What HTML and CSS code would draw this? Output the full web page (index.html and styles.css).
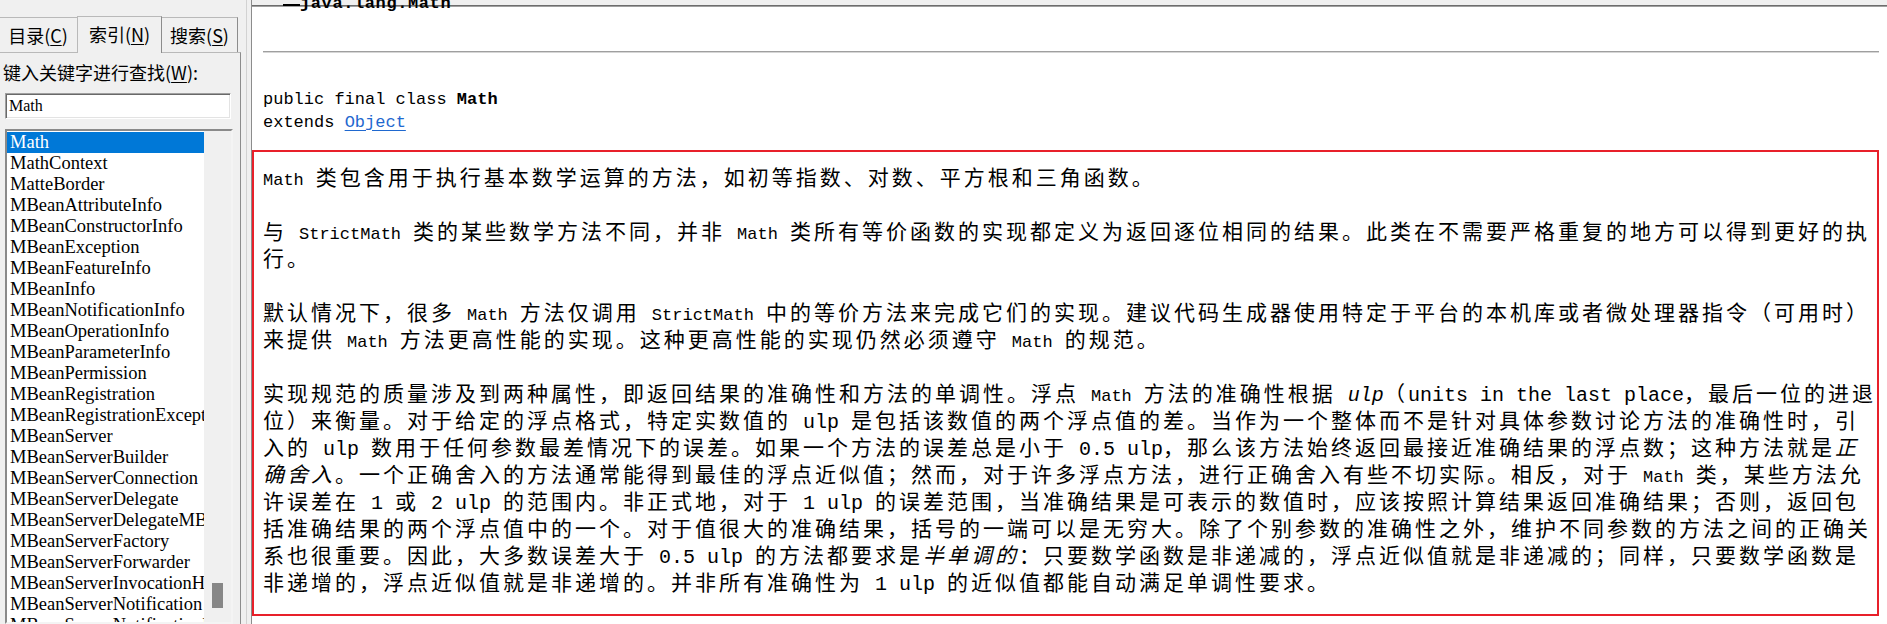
FILE: index.html
```html
<!DOCTYPE html>
<html lang="zh-CN">
<head>
<meta charset="utf-8">
<title>Math</title>
<link rel="stylesheet" href="styles.css">
</head>
<body>
<div class="app">
  <aside class="side">
    <div class="tabs">
      <div class="tab first">目录(<u>C</u>)</div>
      <div class="tab sel">索引(<u>N</u>)</div>
      <div class="tab third">搜索(<u>S</u>)</div>
    </div>
    <div class="pane">
      <div class="lbl">键入关键字进行查找(<u>W</u>):</div>
      <div class="field">Math</div>
      <div class="list">
        <div class="items">
          <div class="item sel">Math</div>
          <div class="item">MathContext</div>
          <div class="item">MatteBorder</div>
          <div class="item">MBeanAttributeInfo</div>
          <div class="item">MBeanConstructorInfo</div>
          <div class="item">MBeanException</div>
          <div class="item">MBeanFeatureInfo</div>
          <div class="item">MBeanInfo</div>
          <div class="item">MBeanNotificationInfo</div>
          <div class="item">MBeanOperationInfo</div>
          <div class="item">MBeanParameterInfo</div>
          <div class="item">MBeanPermission</div>
          <div class="item">MBeanRegistration</div>
          <div class="item">MBeanRegistrationException</div>
          <div class="item">MBeanServer</div>
          <div class="item">MBeanServerBuilder</div>
          <div class="item">MBeanServerConnection</div>
          <div class="item">MBeanServerDelegate</div>
          <div class="item">MBeanServerDelegateMBean</div>
          <div class="item">MBeanServerFactory</div>
          <div class="item">MBeanServerForwarder</div>
          <div class="item">MBeanServerInvocationHandler</div>
          <div class="item">MBeanServerNotification</div>
          <div class="item">MBeanServerNotificationFilter</div>
        </div>
        <div class="sb"><div class="thumb"></div></div>
      </div>
    </div>
  </aside>
  <div class="split"></div>
  <main class="content">
    <div class="tree"><span class="elbow"></span>java.lang.Math</div>
    <hr class="rule">
    <pre class="sig">public final class <b>Math</b>
extends <a href="#">Object</a></pre>
    <div class="block">
      <p><span class="lat"><code>Math</code> </span>类包含用于执行基本数学运算的方法，如初等指数、对数、平方根和三角函数。</p>
      <p>与<span class="lat"> <code>StrictMath</code> </span>类的某些数学方法不同，并非<span class="lat"> <code>Math</code> </span>类所有等价函数的实现都定义为返回逐位相同的结果。此类在不需要严格重复的地方可以得到更好的执行。</p>
      <p>默认情况下，很多<span class="lat"> <code>Math</code> </span>方法仅调用<span class="lat"> <code>StrictMath</code> </span>中的等价方法来完成它们的实现。建议代码生成器使用特定于平台的本机库或者微处理器指令（可用时）来提供<span class="lat"> <code>Math</code> </span>方法更高性能的实现。这种更高性能的实现仍然必须遵守<span class="lat"> <code>Math</code> </span>的规范。</p>
      <p>实现规范的质量涉及到两种属性，即返回结果的准确性和方法的单调性。浮点<span class="lat"> <code>Math</code> </span>方法的准确性根据<span class="lat"> <i>ulp</i></span>（<span class="lat">units in the last place</span>，最后一位的进退位）来衡量。对于给定的浮点格式，特定实数值的<span class="lat"> ulp </span>是包括该数值的两个浮点值的差。当作为一个整体而不是针对具体参数讨论方法的准确性时，引入的<span class="lat"> ulp </span>数用于任何参数最差情况下的误差。如果一个方法的误差总是小于<span class="lat"> 0.5 ulp</span>，那么该方法始终返回最接近准确结果的浮点数；这种方法就是<i>正确舍入</i>。一个正确舍入的方法通常能得到最佳的浮点近似值；然而，对于许多浮点方法，进行正确舍入有些不切实际。相反，对于<span class="lat"> <code>Math</code> </span>类，某些方法允许误差在<span class="lat"> 1 </span>或<span class="lat"> 2 ulp </span>的范围内。非正式地，对于<span class="lat"> 1 ulp </span>的误差范围，当准确结果是可表示的数值时，应该按照计算结果返回准确结果；否则，返回包括准确结果的两个浮点值中的一个。对于值很大的准确结果，括号的一端可以是无穷大。除了个别参数的准确性之外，维护不同参数的方法之间的正确关系也很重要。因此，大多数误差大于<span class="lat"> 0.5 ulp </span>的方法都要求是<i>半单调的</i>：只要数学函数是非递减的，浮点近似值就是非递减的；同样，只要数学函数是非递增的，浮点近似值就是非递增的。并非所有准确性为<span class="lat"> 1 ulp </span>的近似值都能自动满足单调性要求。</p>
    </div>
  </main>
</div>
</body>
</html>
```

FILE: styles.css
```css
* { box-sizing: border-box; }

html, body {
  margin: 0;
  padding: 0;
}

body {
  width: 1887px;
  height: 624px;
  overflow: hidden;
  background: #f0f0f0;
  color: #000;
  font-family: "Noto Sans CJK SC", sans-serif;
}

.app {
  display: flex;
  height: 624px;
}

/* ---------- left index panel ---------- */
.side {
  width: 241px;
  flex: none;
  display: flex;
  flex-direction: column;
  background: #f0f0f0;
}

.tabs {
  height: 52px;
  display: flex;
  align-items: flex-end;
}

.tab {
  height: 35px;
  display: flex;
  align-items: center;
  justify-content: center;
  font-size: 18px;
  line-height: 24px;
  background: #f0f0f0;
  border-top: 1px solid #b9b9b9;
  border-left: 1px solid #b9b9b9;
  border-right: 1px solid #8c8c8c;
}

.tab.first {
  width: 79px;
  margin-left: -2px;
  border-right: none;
}

.tab.sel {
  width: 85px;
  height: 37px;
  margin-bottom: -1px;
  padding-bottom: 3px;
  position: relative;
  z-index: 1;
}

.tab.third {
  width: 76px;
  border-left: none;
}

.tab u, .lbl u { text-decoration-thickness: 1px; text-underline-offset: 2px; }

.pane {
  flex: 1;
  min-height: 0;
  display: flex;
  flex-direction: column;
  padding-left: 5px;
  border-top: 1px solid #b9b9b9;
  border-right: 1px solid #8c8c8c;
}

.lbl {
  margin: 7px 0 0 -2px;
  font-size: 18px;
  line-height: 24px;
  white-space: nowrap;
}

.field {
  margin-top: 9px;
  width: 226px;
  height: 26px;
  background: #fff;
  border: 1px solid;
  border-color: #a0a0a0 #fff #fff #a0a0a0;
  box-shadow: inset 1px 1px 0 #696969, inset -1px -1px 0 #e3e3e3;
  padding: 1px 0 0 3px;
  font-family: "Liberation Serif", serif;
  font-size: 16px;
  line-height: 22px;
}

.list {
  margin-top: 10px;
  width: 228px;
  flex: 1;
  min-height: 0;
  display: flex;
  background: #fff;
  border: 2px solid;
  border-color: #8a8a8a #f4f4f4 #f4f4f4 #8a8a8a;
  overflow: hidden;
}

.items {
  width: 197px;
  flex: none;
  padding-top: 1px;
  overflow: hidden;
}

.item {
  height: 21px;
  padding-left: 3px;
  font-family: "Liberation Serif", serif;
  font-size: 18.5px;
  line-height: 21px;
  white-space: nowrap;
  overflow: hidden;
}

.item.sel {
  background: #0078d7;
  color: #fff;
}

.sb {
  flex: 1;
  background: #f0f0f0;
}

.thumb {
  margin: 452px 0 0 8px;
  width: 11px;
  height: 25px;
  background: #878787;
}

/* ---------- splitter ---------- */
.split {
  width: 11px;
  flex: none;
  border-right: 1px solid #8c8c8c;
  background: linear-gradient(to right, #f0f0f0 5px, #d2d2d2 5px, #d2d2d2 6px, #f0f0f0 6px);
}

/* ---------- document pane ---------- */
.content {
  flex: 1;
  min-width: 0;
  overflow: hidden;
  padding: 0 8px 0 11px;
  background: linear-gradient(to bottom, #f0f0f0 0, #f0f0f0 5px, #6d6d6d 5px, #6d6d6d 6px, #a0a0a0 6px, #a0a0a0 7px, #fff 7px);
}

.tree {
  margin-top: -8px;
  padding-left: 20px;
  font-family: "Liberation Mono", monospace;
  font-size: 17px;
  font-weight: bold;
  letter-spacing: 0.6px;
  line-height: 23px;
  white-space: pre;
}

.elbow {
  display: inline-block;
  width: 17px;
  height: 2px;
  background: #000;
  vertical-align: 2px;
}

.rule {
  margin: 36px 0 0;
  height: 2px;
  border: none;
  border-top: 1px solid #9f9f9f;
  border-bottom: 1px solid #d6d6d6;
}

.sig {
  margin: 35px 0 0;
  font-family: "Liberation Mono", monospace;
  font-size: 17px;
  line-height: 23px;
}

.sig a {
  color: #1f68cf;
  text-decoration: underline;
  text-underline-offset: 3px;
}

.block {
  margin: 16px 0 0 -11px;
  border: 2px solid #e8202a;
  padding: 11px 0 19px 9px;
}

.block p {
  margin: 0 -3px 27px 0;
  font-family: "Noto Sans CJK SC", sans-serif;
  font-size: 21px;
  letter-spacing: 3px;
  line-height: 27px;
  text-autospace: no-autospace;
  text-spacing-trim: space-all;
}

.block p:last-child { margin-bottom: 0; }

.lat {
  font-family: "Liberation Mono", monospace;
  font-size: 20px;
  letter-spacing: 0;
  line-height: 0;
}

.block code {
  font-family: "Liberation Mono", monospace;
  font-size: 17px;
  letter-spacing: 0;
  line-height: 0;
}
```
